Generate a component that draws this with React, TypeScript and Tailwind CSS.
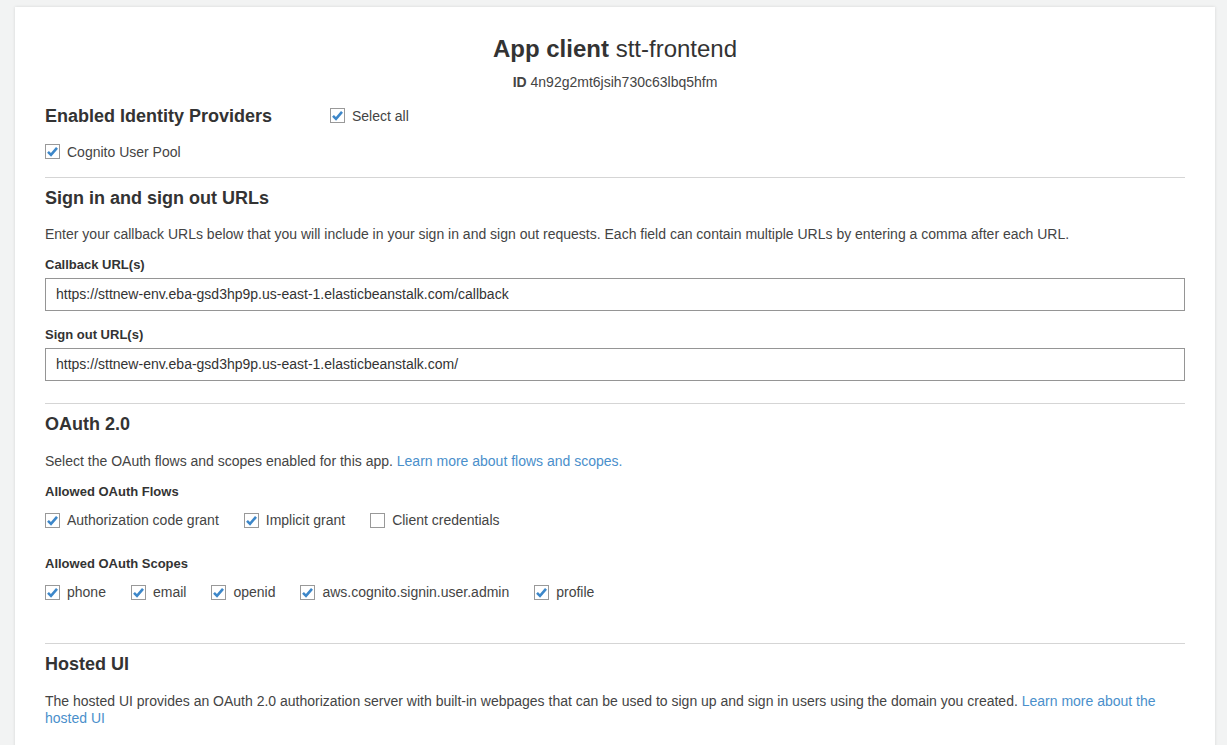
import React from "react";

const FONT = { fontFamily: '"Liberation Sans", Arial, sans-serif' };

function Checkbox({ checked, label }: { checked: boolean; label: string }) {
  return (
    <label className="inline-flex items-center text-[14px] leading-5 text-[#444]">
      <span className="mr-[7px] flex h-[15px] w-[15px] items-center justify-center border border-[#999] bg-white">
        {checked ? (
          <svg width="13" height="13" viewBox="0 0 13 13" aria-hidden="true">
            <path
              d="M2 6.8 L5 9.8 L11 2.8"
              fill="none"
              stroke="#3d87c9"
              strokeWidth="2.6"
              strokeLinecap="butt"
              strokeLinejoin="miter"
            />
          </svg>
        ) : null}
      </span>
      <span>{label}</span>
    </label>
  );
}

function SectionHeading({ children }: { children: React.ReactNode }) {
  return (
    <h2 className="text-[18px] font-bold leading-6 text-[#333]">{children}</h2>
  );
}

function UrlField({ label, value }: { label: string; value: string }) {
  return (
    <div>
      <div className="text-[13px] font-bold leading-[18px] text-[#333]">
        {label}
      </div>
      <div className="mt-[4px] flex h-[33px] items-center border border-[#959595] bg-white px-[10px] text-[14px] text-[#333]">
        {value}
      </div>
    </div>
  );
}

export default function App() {
  return (
    <div
      className="min-h-[745px] bg-[#f2f3f3] pl-[15px] pr-[12px] pt-[7px]"
      style={FONT}
    >
      <div className="w-[1200px] bg-white px-[30px] pb-10 pt-[27px] shadow-[0_0_3px_rgba(0,0,0,0.12)]">
        <div className="text-center">
          <h1 className="text-[24px] leading-[30px] text-[#333]">
            <span className="font-bold">App client</span> stt-frontend
          </h1>
          <div className="mt-[9px] text-[14px] leading-[18px] text-[#444]">
            <span className="font-bold">ID</span> 4n92g2mt6jsih730c63lbq5hfm
          </div>
        </div>

        <div className="mt-[11px] flex items-center">
          <div className="w-[285px]">
            <SectionHeading>Enabled Identity Providers</SectionHeading>
          </div>
          <div className="pt-[3px]">
            <Checkbox checked label="Select all" />
          </div>
        </div>
        <div className="mt-[12px]">
          <Checkbox checked label="Cognito User Pool" />
        </div>

        <hr className="mt-[12px] border-t border-[#d5d5d5]" />

        <div className="mt-[8px]">
          <SectionHeading>Sign in and sign out URLs</SectionHeading>
        </div>
        <p className="mt-[14px] text-[14px] leading-5 text-[#444]">
          Enter your callback URLs below that you will include in your sign in
          and sign out requests. Each field can contain multiple URLs by
          entering a comma after each URL.
        </p>
        <div className="mt-[12px]">
          <UrlField
            label="Callback URL(s)"
            value="https://sttnew-env.eba-gsd3hp9p.us-east-1.elasticbeanstalk.com/callback"
          />
        </div>
        <div className="mt-[15px]">
          <UrlField
            label="Sign out URL(s)"
            value="https://sttnew-env.eba-gsd3hp9p.us-east-1.elasticbeanstalk.com/"
          />
        </div>

        <hr className="mt-[22px] border-t border-[#d5d5d5]" />

        <div className="mt-[8px]">
          <SectionHeading>OAuth 2.0</SectionHeading>
        </div>
        <p className="mt-[15px] text-[14px] leading-5 text-[#444]">
          Select the OAuth flows and scopes enabled for this app.{" "}
          <a className="text-[#4a8fcb]" href="#">
            Learn more about flows and scopes.
          </a>
        </p>
        <div className="mt-[12px] text-[13px] font-bold leading-[18px] text-[#333]">
          Allowed OAuth Flows
        </div>
        <div className="mt-[9px] flex gap-[25px]">
          <Checkbox checked label="Authorization code grant" />
          <Checkbox checked label="Implicit grant" />
          <Checkbox checked={false} label="Client credentials" />
        </div>
        <div className="mt-[25px] text-[13px] font-bold leading-[18px] text-[#333]">
          Allowed OAuth Scopes
        </div>
        <div className="mt-[9px] flex gap-[25px]">
          <Checkbox checked label="phone" />
          <Checkbox checked label="email" />
          <Checkbox checked label="openid" />
          <Checkbox checked label="aws.cognito.signin.user.admin" />
          <Checkbox checked label="profile" />
        </div>

        <hr className="mt-[41px] border-t border-[#d5d5d5]" />

        <div className="mt-[8px]">
          <SectionHeading>Hosted UI</SectionHeading>
        </div>
        <p className="mt-[17px] text-[14px] leading-[17px] text-[#444]">
          The hosted UI provides an OAuth 2.0 authorization server with built-in
          webpages that can be used to sign up and sign in users using the
          domain you created.{" "}
          <a className="text-[#4a8fcb]" href="#">
            Learn more about the hosted UI
          </a>
        </p>
      </div>
    </div>
  );
}
